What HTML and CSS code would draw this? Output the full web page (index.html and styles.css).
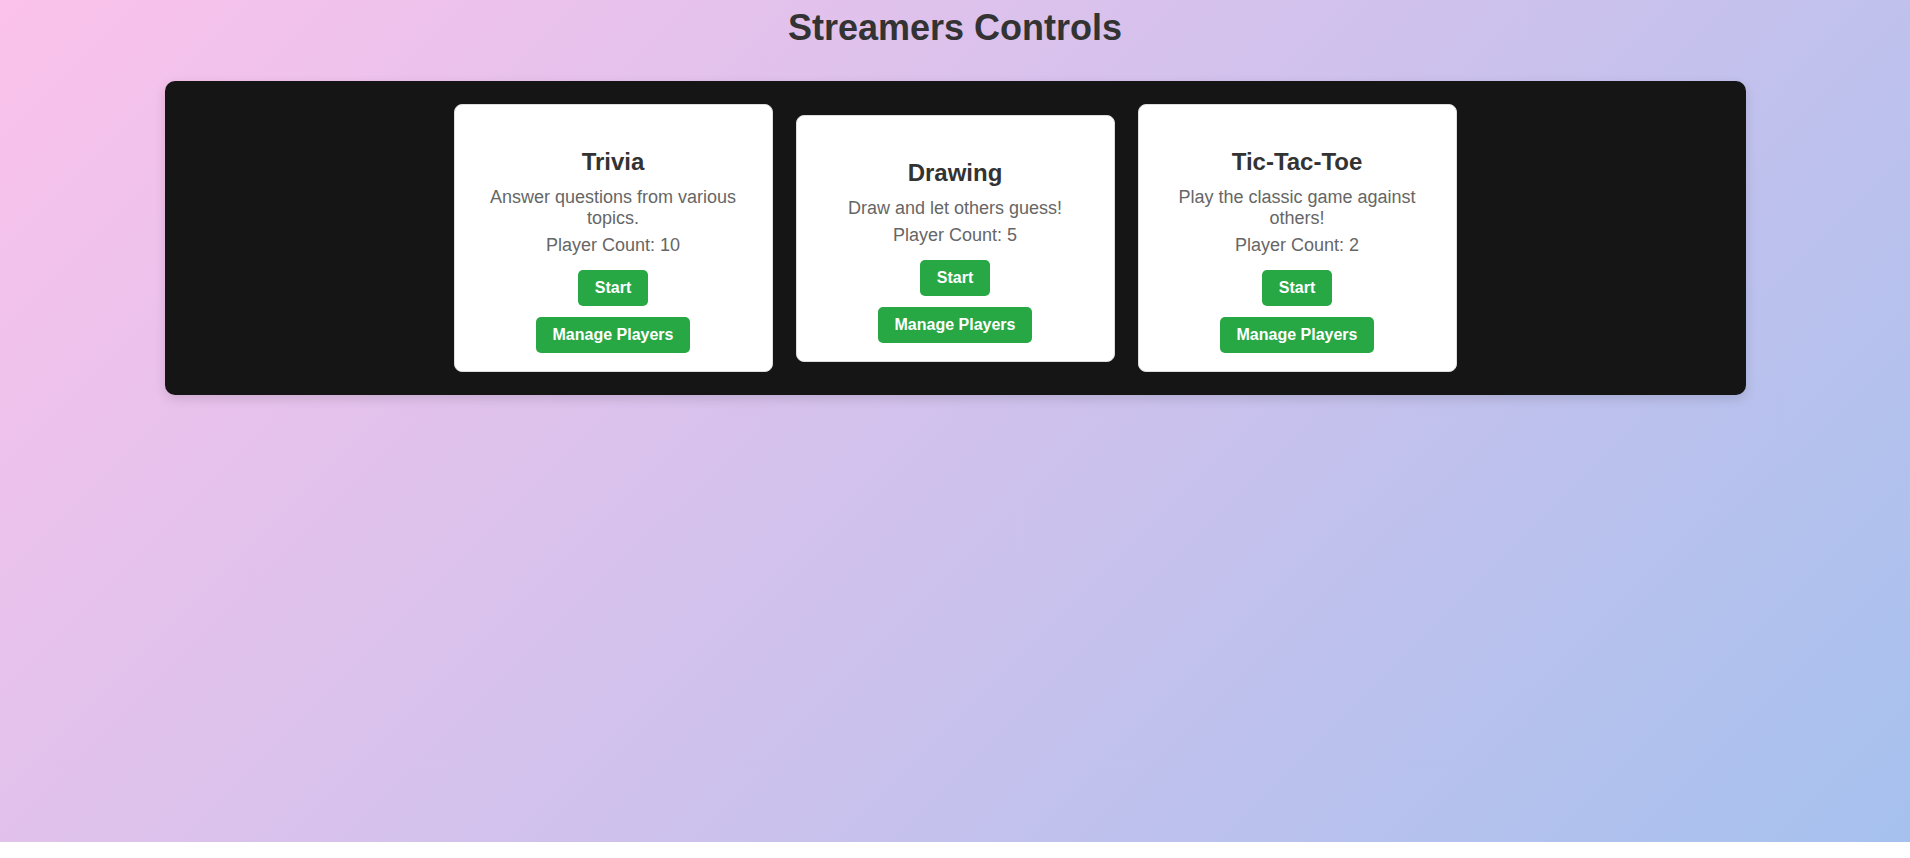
FILE: index.html
```html
<!DOCTYPE html>
<html lang="en">
<head>
<meta charset="utf-8">
<title>Streamers Controls</title>
<link rel="stylesheet" href="styles.css">
</head>
<body>
<div class="page">
  <h1 class="page-title">Streamers Controls</h1>
  <div class="panel">
    <div class="card">
      <h2 class="card-title">Trivia</h2>
      <p class="card-desc">Answer questions from various topics.</p>
      <p class="card-count">Player Count: 10</p>
      <button class="btn btn-start">Start</button>
      <button class="btn">Manage Players</button>
    </div>
    <div class="card">
      <h2 class="card-title">Drawing</h2>
      <p class="card-desc">Draw and let others guess!</p>
      <p class="card-count">Player Count: 5</p>
      <button class="btn btn-start">Start</button>
      <button class="btn">Manage Players</button>
    </div>
    <div class="card">
      <h2 class="card-title">Tic-Tac-Toe</h2>
      <p class="card-desc">Play the classic game against others!</p>
      <p class="card-count">Player Count: 2</p>
      <button class="btn btn-start">Start</button>
      <button class="btn">Manage Players</button>
    </div>
  </div>
</div>
</body>
</html>
```

FILE: styles.css
```css
html, body {
  margin: 0;
  padding: 0;
  background: #ffffff;
}

body {
  font-family: "Liberation Sans", Arial, sans-serif;
}

.page {
  height: calc(100vh - 16px);
  box-sizing: border-box;
  padding-top: 7px;
  background: linear-gradient(135deg, #fbc2eb 0%, #a6c1ee 100%);
}

.page-title {
  margin: 0 0 32px;
  text-align: center;
  font-size: 36px;
  font-weight: bold;
  color: #333333;
}

.panel {
  width: 1581px;
  margin: 0 auto;
  box-sizing: border-box;
  padding: 23px 20px;
  background: #151515;
  border-radius: 10px;
  box-shadow: 0 4px 12px rgba(0, 0, 0, 0.12);
  display: flex;
  justify-content: center;
  align-items: center;
  gap: 23px;
}

.card {
  width: 319px;
  box-sizing: border-box;
  background: #ffffff;
  border: 1px solid #dddddd;
  border-radius: 8px;
  padding: 20px 20px 18px;
  display: flex;
  flex-direction: column;
  align-items: center;
  text-align: center;
}

.card-title {
  margin: 23px 0 11px;
  font-size: 24px;
  font-weight: bold;
  color: #333333;
}

.card-desc {
  margin: 0 0 6px;
  font-size: 18px;
  color: #666666;
}

.card-count {
  margin: 0 0 14px;
  font-size: 18px;
  color: #666666;
}

.btn {
  font-family: "Liberation Sans", Arial, sans-serif;
  font-size: 16px;
  font-weight: bold;
  color: #ffffff;
  background: #28a745;
  border: none;
  border-radius: 5px;
  padding: 9px 17px;
  line-height: normal;
  cursor: pointer;
}

.btn-start {
  margin-bottom: 11px;
}
```
